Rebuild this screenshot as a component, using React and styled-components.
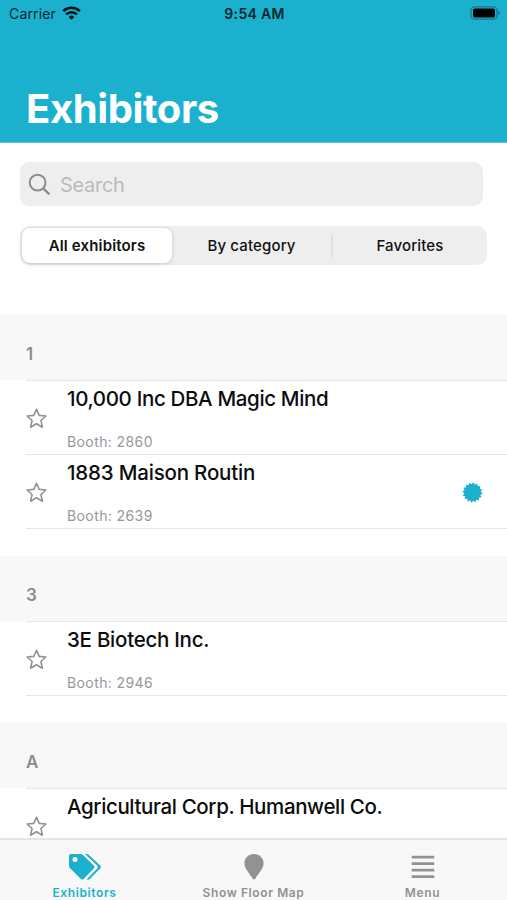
import React from 'react';
import styled, { createGlobalStyle } from 'styled-components';

const GlobalStyle = createGlobalStyle`
  body {
    margin: 0;
    background-color: white;
    font-family: Inter, 'Liberation Sans', sans-serif;
  }

  * {
    box-sizing: border-box;
  }

  h1, h2, h3, p {
    margin: 0;
  }

  button {
    border: none;
    padding: 0;
    background: none;
    font-family: inherit;
  }
`;

const blue = '#1bb1ce';
const grey = '#929292';

const Screen = styled.div`
  display: flex;
  flex-direction: column;
  width: 507px;
  height: 900px;
  overflow: hidden;
  background-color: white;
`;

const Header = styled.header`
  flex: none;
  display: flex;
  flex-direction: column;
  justify-content: space-between;
  height: 143px;
  background-color: ${blue};
  border-bottom: 1px solid #63bfd1;
`;

const StatusBar = styled.div`
  display: grid;
  grid-template-columns: 1fr auto 1fr;
  align-items: center;
  height: 27px;
  padding: 0 7px 0 9px;
  color: #06252b;
  font-size: 14px;
`;

const Carrier = styled.div`
  display: flex;
  align-items: center;
  gap: 6px;
  letter-spacing: 0.15px;

  svg {
    margin-top: -2px;
  }
`;

const Time = styled.div`
  font-weight: 600;
  letter-spacing: 0.3px;
`;

const Battery = styled.svg`
  justify-self: end;
  margin-top: -1px;
`;

const Title = styled.h1`
  padding: 0 26px 9px;
  color: white;
  font-size: 40px;
  line-height: 48px;
  font-weight: 700;
  letter-spacing: -0.4px;
`;

const Filters = styled.div`
  flex: none;
  display: flex;
  flex-direction: column;
  gap: 20px;
  padding: 19px 20px 50px;
`;

const SearchBox = styled.label`
  display: flex;
  align-items: center;
  gap: 9px;
  width: 463px;
  height: 44px;
  padding-left: 8px;
  border-radius: 9px;
  background-color: #eeeeee;
`;

const SearchInput = styled.input`
  flex: 1;
  padding: 2px 0 0;
  border: none;
  outline: none;
  background: none;
  font-family: inherit;
  font-size: 20px;
  letter-spacing: -0.3px;

  &::placeholder {
    color: #bbbbbb;
    opacity: 1;
  }
`;

const Segments = styled.div`
  display: flex;
  align-items: center;
  height: 39px;
  padding: 2px 0 2px 2px;
  border-radius: 10px;
  background-color: #eeeeee;
`;

const Segment = styled.button`
  width: ${({ $width }) => $width}px;
  height: 35px;
  border-radius: 8px;
  background-color: ${({ $active }) => ($active ? 'white' : 'transparent')};
  box-shadow: ${({ $active }) => ($active ? '0 1px 4px rgba(0, 0, 0, 0.18)' : 'none')};
  color: #111;
  font-size: 15px;
  font-weight: ${({ $active }) => ($active ? 600 : 500)};
  letter-spacing: 0.15px;
`;

const Divider = styled.div`
  width: 2px;
  height: 22px;
  background-color: #dfdfdf;
`;

const List = styled.main`
  flex: 1;
  min-height: 0;
  overflow: hidden;
`;

const Section = styled.section`
  margin-bottom: 27px;
`;

const SectionHeader = styled.h2`
  height: 65px;
  padding: 27px 26px 0;
  background-color: #f8f8f8;
  color: #8c8c8c;
  font-size: 17px;
  line-height: 24px;
  font-weight: 600;
`;

const Rows = styled.div`
  margin-left: 26px;
  border-top: 1px solid #e6e6e6;
`;

const Row = styled.div`
  display: flex;
  align-items: center;
  height: 74px;
  padding: 2px 24px 0 0;
  border-bottom: 1px solid #e6e6e6;
`;

const RowText = styled.div`
  flex: 1;
  align-self: stretch;
  padding: 3px 0 0 20px;
`;

const Name = styled.h3`
  color: #0c0c0c;
  font-size: 20.5px;
  line-height: 26px;
  font-weight: 500;
  letter-spacing: ${({ $spacing }) => $spacing}px;
`;

const Booth = styled.p`
  margin-top: 20px;
  color: #989898;
  font-size: 14px;
  line-height: 20px;
  letter-spacing: 0.4px;
`;

const TabBar = styled.nav`
  flex: none;
  display: grid;
  grid-template-columns: repeat(3, 1fr);
  height: 62px;
  border-top: 2px solid #e4e4e4;
  background-color: #f8f8f8;
`;

const Tab = styled.button`
  display: flex;
  flex-direction: column;
  align-items: center;
  padding-top: 12px;
  color: ${({ $active }) => ($active ? blue : grey)};
  font-size: 12px;
  line-height: 16px;
  font-weight: 600;
  letter-spacing: 0.6px;

  svg {
    height: 30px;
    margin-bottom: 3px;
  }
`;

const WifiIcon = () => (
  <svg width="19" height="14" viewBox="0 0 19 14" fill="none" stroke="#031316" strokeWidth="2.6">
    <path d="M1.2 5.1A12 12 0 0 1 17.8 5.1" />
    <path d="M4.1 8.4A7.8 7.8 0 0 1 14.9 8.4" />
    <path d="M9.5 13.8L6.6 10.9A4.2 4.2 0 0 1 12.4 10.9Z" fill="#031316" stroke="none" />
  </svg>
);

const BatteryIcon = () => (
  <Battery width="30" height="14" viewBox="0 0 30 14">
    <rect x="1" y="0.8" width="26" height="12.4" rx="3.6" fill="none" stroke="#12788c" strokeWidth="1.3" />
    <rect x="3" y="2.5" width="22" height="9" rx="1.8" fill="#000" />
    <path d="M28.2 4.7Q30 5.6 30 7T28.2 9.3Z" fill="#12788c" />
  </Battery>
);

const SearchIcon = () => (
  <svg width="23" height="23" viewBox="0 0 23 23" fill="none" stroke="#8d8d8d" strokeWidth="2">
    <circle cx="9.6" cy="9.6" r="7.9" />
    <path d="M15.3 15.3L21.4 21.4" strokeWidth="2.4" />
  </svg>
);

const StarIcon = () => (
  <svg width="21" height="21" viewBox="0 0 21 21" fill="none" stroke="#929292" strokeWidth="1.6" strokeLinejoin="round">
    <path d="M10.5 1.2L13.2 7.4L19.9 8L14.9 12.5L16.4 19.2L10.5 15.8L4.6 19.2L6.1 12.5L1.1 8L7.8 7.4Z" />
  </svg>
);

const sealPoints = Array.from({ length: 32 }, (_, i) => {
  const r = i % 2 ? 8.2 : 10.3;
  const angle = ((i + 0.5) * Math.PI) / 16;
  return `${(10.5 + r * Math.cos(angle)).toFixed(2)},${(10.5 + r * Math.sin(angle)).toFixed(2)}`;
}).join(' ');

const SealIcon = () => (
  <svg width="21" height="21" viewBox="0 0 21 21" fill={blue}>
    <polygon points={sealPoints} />
  </svg>
);

const TagsIcon = () => (
  <svg width="34" height="30" viewBox="0 0 34 30" fill="currentColor">
    <path
      fillRule="evenodd"
      d="M3 2H12.8Q14 2 14.9 2.9L26 13.7Q27.3 15 26 16.3L15.6 26.9Q14.3 28.2 13 26.9L2 16.3Q1 15.3 1 14V4Q1 2 3 2ZM7 5.1A2.5 2.5 0 1 0 7 10.1A2.5 2.5 0 1 0 7 5.1Z"
    />
    <path d="M17 2H18.6Q20 2 20.9 2.9L32.4 13.8Q33.6 15 32.4 16.2L21.7 26.9Q20.2 28.4 18.8 27.2L29.2 16.5Q30.6 15 29.2 13.6Z" />
  </svg>
);

const PinIcon = () => (
  <svg width="20" height="30" viewBox="0 0 20 30" fill="currentColor">
    <path d="M10 2C4.6 2 0.4 6.1 0.4 11.2C0.4 17.2 7 22.8 8.5 26.4Q10 28.4 11.5 26.4C13 22.8 19.6 17.2 19.6 11.2C19.6 6.1 15.4 2 10 2Z" />
  </svg>
);

const MenuIcon = () => (
  <svg width="24" height="30" viewBox="0 0 24 30" stroke="currentColor" strokeWidth="2.9">
    <path d="M0.7 5.1H23.3M0.7 11.6H23.3M0.7 18.1H23.3M0.7 24.6H23.3" />
  </svg>
);

const sections = [
  {
    letter: '1',
    exhibitors: [
      { name: '10,000 Inc DBA Magic Mind', booth: '2860', spacing: -0.34 },
      { name: '1883 Maison Routin', booth: '2639', spacing: -0.19, featured: true },
    ],
  },
  {
    letter: '3',
    exhibitors: [{ name: '3E Biotech Inc.', booth: '2946', spacing: -0.26 }],
  },
  {
    letter: 'A',
    exhibitors: [{ name: 'Agricultural Corp. Humanwell Co.', spacing: -0.37 }],
  },
];

function Exhibitor({ name, booth, spacing, featured }) {
  return (
    <Row>
      <StarIcon />
      <RowText>
        <Name $spacing={spacing}>{name}</Name>
        {booth && <Booth>Booth: {booth}</Booth>}
      </RowText>
      {featured && <SealIcon />}
    </Row>
  );
}

const App = () => (
  <Screen>
    <GlobalStyle />
    <Header>
      <StatusBar>
        <Carrier>
          Carrier
          <WifiIcon />
        </Carrier>
        <Time>9:54 AM</Time>
        <BatteryIcon />
      </StatusBar>
      <Title>Exhibitors</Title>
    </Header>
    <Filters>
      <SearchBox>
        <SearchIcon />
        <SearchInput placeholder="Search" />
      </SearchBox>
      <Segments>
        <Segment $width={150} $active>All exhibitors</Segment>
        <Segment $width={159}>By category</Segment>
        <Divider />
        <Segment $width={154}>Favorites</Segment>
      </Segments>
    </Filters>
    <List>
      {sections.map(({ letter, exhibitors }) => (
        <Section key={letter}>
          <SectionHeader>{letter}</SectionHeader>
          <Rows>
            {exhibitors.map((exhibitor) => (
              <Exhibitor key={exhibitor.name} {...exhibitor} />
            ))}
          </Rows>
        </Section>
      ))}
    </List>
    <TabBar>
      <Tab $active>
        <TagsIcon />
        Exhibitors
      </Tab>
      <Tab>
        <PinIcon />
        Show Floor Map
      </Tab>
      <Tab>
        <MenuIcon />
        Menu
      </Tab>
    </TabBar>
  </Screen>
);

export default App;
